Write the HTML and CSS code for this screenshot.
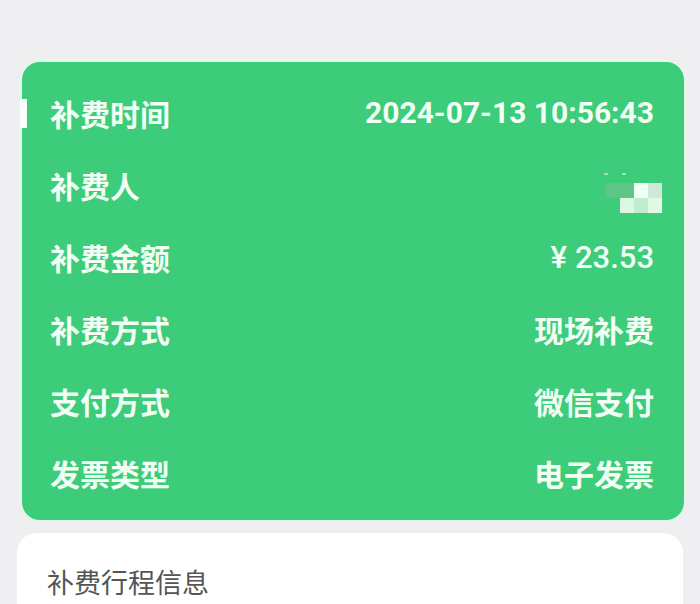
FILE: index.html
```html
<!DOCTYPE html>
<html lang="zh-CN">
<head>
<meta charset="utf-8">
<link rel="stylesheet" href="styles.css">
</head>
<body>
<div class="page">
  <div class="card">
    <span class="marker"></span>
    <div class="row"><span class="label">补费时间</span><span class="value num">2024-07-13 10:56:43</span></div>
    <div class="row"><span class="label">补费人</span>
      <span class="value blur">
        <span class="dots"><i></i><i></i></span>
        <span class="mosaic">
          <i class="c1"></i><i class="c1"></i><i class="c2"></i><i class="c3"></i>
          <i class="c0"></i><i class="c4"></i><i class="c5"></i><i class="c6"></i>
        </span>
      </span>
    </div>
    <div class="row"><span class="label">补费金额</span><span class="value num amount">¥<span class="gap"></span>23.53</span></div>
    <div class="row"><span class="label">补费方式</span><span class="value">现场补费</span></div>
    <div class="row"><span class="label">支付方式</span><span class="value">微信支付</span></div>
    <div class="row"><span class="label">发票类型</span><span class="value">电子发票</span></div>
  </div>
  <div class="trip">
    <div class="trip-title">补费行程信息</div>
  </div>
</div>
</body>
</html>
```
FILE: styles.css
```css
html, body {
  margin: 0;
  padding: 0;
  background: #efeff1;
  height: 100%;
  overflow: hidden;
}
.page {
  padding: 60px 14px 0 20px;
  font-family: "Noto Sans CJK SC", "Noto Sans", sans-serif;
}
.card {
  position: relative;
  background: #3dcc79;
  border: 2px solid #e2f8eb;
  border-radius: 20px;
  padding: 15px 30px 11px 28px;
  color: #f1fff5;
}
.marker {
  position: absolute;
  left: -2px;
  top: 37px;
  width: 7px;
  height: 29px;
  background: #f6fff9;
}
.row {
  height: 72px;
  display: flex;
  align-items: center;
  justify-content: space-between;
}
.label, .value {
  font-size: 30px;
  font-weight: 600;
  line-height: 1;
  letter-spacing: 0;
}
.num {
  font-family: Roboto, "Noto Sans CJK SC", sans-serif;
  font-weight: 700;
  font-size: 30px;
}
.amount {
  font-weight: 500;
  font-size: 31px;
}
.gap {
  display: inline-block;
  width: 8px;
}
.blur {
  display: flex;
  flex-direction: column;
  align-items: flex-end;
  margin-right: -8px;
  margin-top: 16px;
}
.dots {
  display: flex;
  gap: 14px;
  margin-right: 36px;
  margin-bottom: 8px;
}
.dots i {
  width: 4px;
  height: 2px;
  background: #9fe3b8;
}
.mosaic {
  display: grid;
  grid-template-columns: repeat(4, 14px);
  grid-template-rows: repeat(2, 15px);
  filter: blur(0.6px);
}
.mosaic i { display: block; }
.mosaic .c0 { background: transparent; }
.mosaic .c1 { background: #5fc587; }
.mosaic .c2 { background: #effff6; }
.mosaic .c3 { background: #cfe8d8; }
.mosaic .c4 { background: #d9f7e1; }
.mosaic .c5 { background: #c1edcf; }
.mosaic .c6 { background: #def9e5; }
.trip {
  margin: 11px 3px 0 -3px;
  background: #ffffff;
  border-radius: 20px 20px 0 0;
  padding: 33px 30px 6px;
}
.trip-title {
  font-size: 27px;
  color: #555555;
  line-height: 32px;
}
```
